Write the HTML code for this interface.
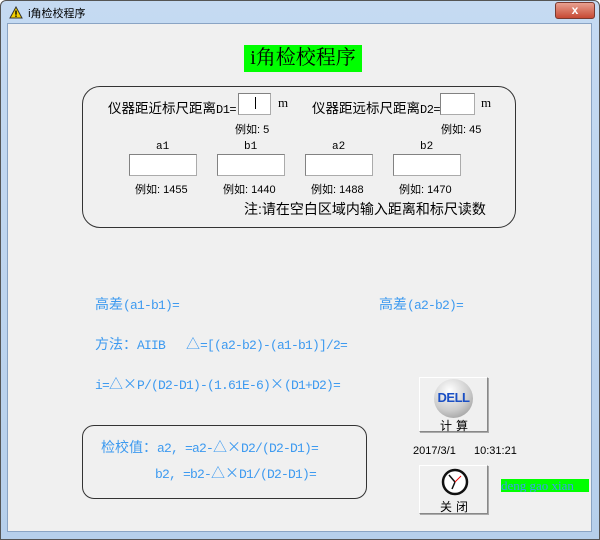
<!DOCTYPE html>
<html><head><meta charset="utf-8"><style>
*{margin:0;padding:0;box-sizing:border-box}
body{width:600px;height:540px;overflow:hidden;background:#fff;font-family:"Liberation Sans","Noto Sans CJK SC",sans-serif}
#win{position:absolute;left:0;top:0;width:600px;height:540px;background:linear-gradient(#c5daf2,#b6cfeb);border:1px solid #555;border-radius:6px 6px 0 0}
#client{position:absolute;left:7px;top:23px;width:585px;height:509px;background:#f0f0f0;border:1px solid #8aa4c4}
.a{position:absolute;white-space:nowrap}
.s{font-family:"Liberation Serif","Noto Serif CJK SC","Noto Sans CJK SC",serif}
.m{font-family:"Liberation Mono","Noto Sans CJK SC",monospace}
.m b{font-weight:normal;font-family:"Noto Sans CJK SC",sans-serif;font-size:14px;letter-spacing:0}
.blue{color:#3d9af0;font-size:13px;letter-spacing:-0.8px}
.inp{position:absolute;background:#fff;border:1px solid #ababab;border-top-color:#828282;border-left-color:#828282}
.box{position:absolute;border:1.5px solid #333;border-radius:18px}
.btn{position:absolute;background:#f0f0f0;border:1px solid #fff;border-right-color:#888;border-bottom-color:#888;box-shadow:1px 1px 0 #aaa}
.sm{font-size:11px;color:#000}
</style></head><body>
<div id="win">
<div class="a" style="left:8px;top:4px;font-size:11px">
<svg width="14" height="13" viewBox="0 0 14 13" style="vertical-align:-2px"><path d="M7 1L13 12H1Z" fill="#f4d000" stroke="#333" stroke-width="1"/><rect x="6.3" y="4.5" width="1.4" height="4.2" fill="#000"/><rect x="6.3" y="9.5" width="1.4" height="1.4" fill="#000"/></svg>
<span style="margin-left:2px">i角检校程序</span></div>
<div class="a" style="left:554px;top:1px;width:40px;height:17px;background:linear-gradient(#e8a090,#c74a35);border:1px solid #7a3a30;border-radius:3px;color:#fff;font-size:12px;font-weight:bold;text-align:center;line-height:15px">x</div>
</div>
<div id="client"></div>

<div class="a s" style="left:244px;top:45px;width:118px;height:27px;background:#00ff00;font-size:20px;line-height:27px;text-align:center">i角检校程序</div>

<div class="box" style="left:82px;top:86px;width:434px;height:142px"></div>
<div class="a m" style="left:108px;top:97px;font-size:12px;letter-spacing:-0.5px"><b style="font-size:13.5px">仪器距近标尺距离</b>D1=</div>
<div class="inp" style="left:238px;top:93px;width:33px;height:22px"><div style="position:absolute;left:16px;top:3px;width:1px;height:12px;background:#000"></div></div>
<div class="a s" style="left:278px;top:95px;font-size:13px">m</div>
<div class="a m" style="left:312px;top:97px;font-size:12px;letter-spacing:-0.5px"><b style="font-size:13.5px">仪器距远标尺距离</b>D2=</div>
<div class="inp" style="left:440px;top:93px;width:35px;height:22px"></div>
<div class="a s" style="left:481px;top:95px;font-size:13px">m</div>
<div class="a sm" style="left:235px;top:121px">例如: 5</div>
<div class="a sm" style="left:441px;top:121px">例如: 45</div>

<div class="a m" style="left:156px;top:141px;font-size:11px">a1</div>
<div class="a m" style="left:244px;top:141px;font-size:11px">b1</div>
<div class="a m" style="left:332px;top:141px;font-size:11px">a2</div>
<div class="a m" style="left:420px;top:141px;font-size:11px">b2</div>
<div class="inp" style="left:129px;top:154px;width:68px;height:22px"></div>
<div class="inp" style="left:217px;top:154px;width:68px;height:22px"></div>
<div class="inp" style="left:305px;top:154px;width:68px;height:22px"></div>
<div class="inp" style="left:393px;top:154px;width:68px;height:22px"></div>
<div class="a sm" style="left:135px;top:181px">例如: 1455</div>
<div class="a sm" style="left:223px;top:181px">例如: 1440</div>
<div class="a sm" style="left:311px;top:181px">例如: 1488</div>
<div class="a sm" style="left:399px;top:181px">例如: 1470</div>
<div class="a" style="left:244px;top:199px;font-size:14px">注:请在空白区域内输入距离和标尺读数</div>

<div class="a m blue" style="left:95px;top:294px"><b>高差</b>(a1-b1)=</div>
<div class="a m blue" style="left:379px;top:294px"><b>高差</b>(a2-b2)=</div>
<div class="a m blue" style="left:95px;top:334px"><b>方法：</b>AIIB&nbsp;&nbsp; <b>△</b>=[(a2-b2)-(a1-b1)]/2=</div>
<div class="a m blue" style="left:95px;top:374px">i=<b>△×</b>P/(D2-D1)-(1.61E-6)<b>×</b>(D1+D2)=</div>

<div class="box" style="left:82px;top:425px;width:285px;height:74px;border-radius:12px"></div>
<div class="a m blue" style="left:101px;top:437px"><b>检校值：</b>a2, =a2-<b>△×</b>D2/(D2-D1)=</div>
<div class="a m blue" style="left:155px;top:463px">b2, =b2-<b>△×</b>D1/(D2-D1)=</div>

<div class="btn" style="left:419px;top:377px;width:69px;height:55px">
<div style="position:absolute;left:14px;top:1px;width:39px;height:39px;border-radius:50%;background:radial-gradient(circle at 40% 30%,#fff,#ccc 55%,#888)"></div>
<div class="a" style="left:14px;top:12px;width:39px;text-align:center;color:#1a4fc4;font-weight:bold;font-size:13px;letter-spacing:-0.5px">DELL</div>
<div class="a" style="left:20px;top:39px;font-size:12px;letter-spacing:4px">计算</div>
</div>
<div class="a sm" style="left:413px;top:445px">2017/3/1</div>
<div class="a sm" style="left:474px;top:445px">10:31:21</div>
<div class="btn" style="left:419px;top:465px;width:69px;height:49px">
<svg class="a" style="left:21px;top:2px" width="28" height="28" viewBox="0 0 28 28"><circle cx="14" cy="14" r="12" fill="#fff" stroke="#111" stroke-width="2.5"/><path d="M14 14L8 7M14 14L11 21" stroke="#111" stroke-width="1.5"/><path d="M14 14L20 8" stroke="#e00" stroke-width="1"/></svg>
<div class="a" style="left:20px;top:32px;font-size:12px;letter-spacing:4px">关闭</div>
</div>
<div class="a s" style="left:501px;top:479px;width:88px;height:13px;background:#00ff00;color:#3d9af0;font-size:13px;line-height:13px;overflow:hidden">deng gao xian</div>
</body></html>
